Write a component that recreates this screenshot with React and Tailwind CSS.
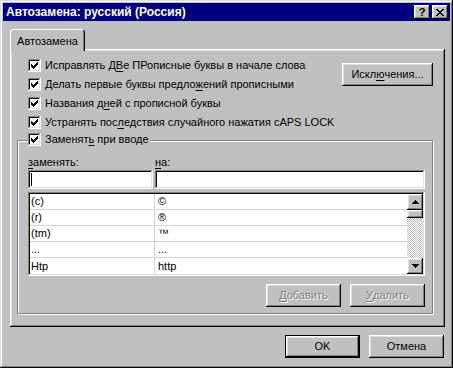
import React from "react";

const raised =
    "bg-[#c0c0c0] shadow-[inset_-1px_-1px_#0a0a0a,inset_1px_1px_#fff,inset_-2px_-2px_#808080,inset_2px_2px_#dfdfdf]";
const sunken =
    "bg-white shadow-[inset_-1px_-1px_#fff,inset_1px_1px_#808080,inset_-2px_-2px_#dfdfdf,inset_2px_2px_#0a0a0a]";

function U({ children }) {
    return <span className="underline underline-offset-[2px]">{children}</span>;
}

function CheckBox() {
    return (
        <div className={`w-[13px] h-[13px] shrink-0 flex items-center justify-center ${sunken}`}>
            <svg width="7" height="7" viewBox="0 0 7 7" shapeRendering="crispEdges">
                <path
                    fill="#000"
                    d="M6 0h1v1H6z M5 1h2v1H5z M0 2h1v1H0z M4 2h3v1H4z M0 3h2v1H0z M3 3h3v1H3z M0 4h5v1H0z M1 5h3v1H1z M2 6h1v1H2z"
                />
            </svg>
        </div>
    );
}

function CheckRow({ children }) {
    return (
        <div className="flex items-center h-[13px] gap-[4px]">
            <CheckBox />
            <span className="whitespace-nowrap">{children}</span>
        </div>
    );
}

function Arrow({ down }) {
    return (
        <svg width="7" height="4" viewBox="0 0 7 4" shapeRendering="crispEdges" className={down ? "rotate-180" : ""}>
            <path fill="#000" d="M3 0h1v1H3z M2 1h3v1H2z M1 2h5v1H1z M0 3h7v1H0z" />
        </svg>
    );
}

const rows = [
    ["(c)", "©"],
    ["(r)", "®"],
    ["(tm)", "™"],
    ["...", "..."],
    ["Htp", "http"],
];

export default function App() {
    return (
        <div
            className={`w-[453px] h-[368px] p-[3px] flex flex-col text-[11px] leading-[13px] text-black font-['Liberation_Sans',Arial,sans-serif] bg-[#c0c0c0] shadow-[inset_-1px_-1px_#0a0a0a,inset_1px_1px_#dfdfdf,inset_-2px_-2px_#808080,inset_2px_2px_#fff]`}
        >
            {/* title bar */}
            <div className="h-[18px] bg-[#000080] flex items-center justify-between pl-[3px] pr-[2px]">
                <span className="text-white font-bold text-[12px] leading-[14px]">Автозамена: русский (Россия)</span>
                <div className="flex gap-[2px]">
                    <div className={`w-[16px] h-[14px] flex items-center justify-center font-bold text-[11px] leading-[11px] ${raised}`}>
                        ?
                    </div>
                    <div className={`w-[16px] h-[14px] flex items-center justify-center ${raised}`}>
                        <svg width="8" height="7" viewBox="0 0 8 7" shapeRendering="crispEdges">
                            <path
                                fill="#000"
                                d="M0 0h2v1H0z M6 0h2v1H6z M1 1h2v1H1z M5 1h2v1H5z M2 2h4v1H2z M3 3h2v1H3z M2 4h4v1H2z M1 5h2v1H1z M5 5h2v1H5z M0 6h2v1H0z M6 6h2v1H6z"
                            />
                        </svg>
                    </div>
                </div>
            </div>

            {/* content */}
            <div className="flex-1 pt-[8px] pl-[7px] pr-[5px] flex flex-col">
                <div className="flex">
                    <div className="relative z-10 -mb-[2px] w-[75px] h-[22px] pt-[6px] text-center bg-[#c0c0c0] rounded-t-[3px] shadow-[inset_1px_1px_#fff,inset_-1px_0_#0a0a0a,inset_-2px_0_#808080]">
                        Автозамена
                    </div>
                </div>

                <div className={`w-[435px] h-[278px] pt-[10px] pl-[7px] ${raised}`}>
                    <div className="flex justify-between items-start pl-[11px] w-[416px]">
                        <div className="flex flex-col gap-[6px]">
                            <CheckRow>
                                Исправлять Д<U>В</U>е ПРописные буквы в начале слова
                            </CheckRow>
                            <CheckRow>
                                Делать первые буквы предло<U>ж</U>ений прописными
                            </CheckRow>
                            <CheckRow>
                                Названия д<U>н</U>ей с прописной буквы
                            </CheckRow>
                            <CheckRow>
                                Устранять пос<U>л</U>едствия случайного нажатия cAPS LOCK
                            </CheckRow>
                        </div>
                        <div className={`mt-[4px] w-[91px] h-[23px] flex items-center justify-center ${raised}`}>
                            Искл<U>ю</U>чения...
                        </div>
                    </div>

                    {/* group box */}
                    <div className="relative mt-[11px] w-[416px] h-[174px] border border-[#808080] shadow-[inset_1px_1px_#fff,1px_1px_#fff] pt-[15px] pl-[10px]">
                        <div className="absolute top-[-8px] left-[10px] bg-[#c0c0c0] pr-[2px]">
                            <CheckRow>
                                Заменят<U>ь</U> при вводе
                            </CheckRow>
                        </div>

                        <div className="w-[397px] flex flex-col">
                            <div className="flex h-[13px]">
                                <span className="w-[127px]">
                                    <U>з</U>аменять:
                                </span>
                                <span>
                                    <U>н</U>а:
                                </span>
                            </div>
                            <div className="flex gap-[2px] mt-[1px]">
                                <div className={`w-[125px] h-[19px] flex items-center pl-[3px] ${sunken}`}>
                                    <div className="w-px h-[13px] bg-black" />
                                </div>
                                <div className={`flex-1 h-[19px] ${sunken}`} />
                            </div>

                            <div className={`mt-[3px] h-[84px] p-[2px] flex ${sunken}`}>
                                <div className="flex-1 flex flex-col">
                                    {rows.map(([a, b], i) => (
                                        <div
                                            key={i}
                                            className={`flex h-[16px] ${i < rows.length - 1 ? "border-b border-[#d4d4d4]" : ""}`}
                                        >
                                            <div className="w-[125px] pl-[1px] border-r border-[#d4d4d4] flex items-center">{a}</div>
                                            <div className="flex-1 pl-[3px] flex items-center">{b}</div>
                                        </div>
                                    ))}
                                </div>
                                <div className="w-[16px] flex flex-col">
                                    <div className={`h-[16px] flex items-center justify-center ${raised}`}>
                                        <Arrow />
                                    </div>
                                    <div className={`h-[8px] ${raised}`} />
                                    <div className="flex-1 bg-[repeating-conic-gradient(#c0c0c0_0%_25%,#fff_0%_50%)] bg-[length:2px_2px]" />
                                    <div className={`h-[16px] flex items-center justify-center ${raised}`}>
                                        <Arrow down />
                                    </div>
                                </div>
                            </div>

                            <div className="mt-[8px] flex justify-end gap-[9px] text-[#808080] [text-shadow:1px_1px_#fff]">
                                <div className={`w-[75px] h-[23px] flex items-center justify-center ${raised}`}>
                                    <U>Д</U>обавить
                                </div>
                                <div className={`w-[75px] h-[23px] flex items-center justify-center ${raised}`}>
                                    <U>У</U>далить
                                </div>
                            </div>
                        </div>
                    </div>
                </div>

                <div className="mt-[8px] flex justify-end gap-[9px] pr-[1px]">
                    <div className="w-[75px] h-[23px] border border-black">
                        <div className={`w-full h-full flex items-center justify-center ${raised}`}>OK</div>
                    </div>
                    <div className={`w-[75px] h-[23px] flex items-center justify-center ${raised}`}>Отмена</div>
                </div>
            </div>
        </div>
    );
}
